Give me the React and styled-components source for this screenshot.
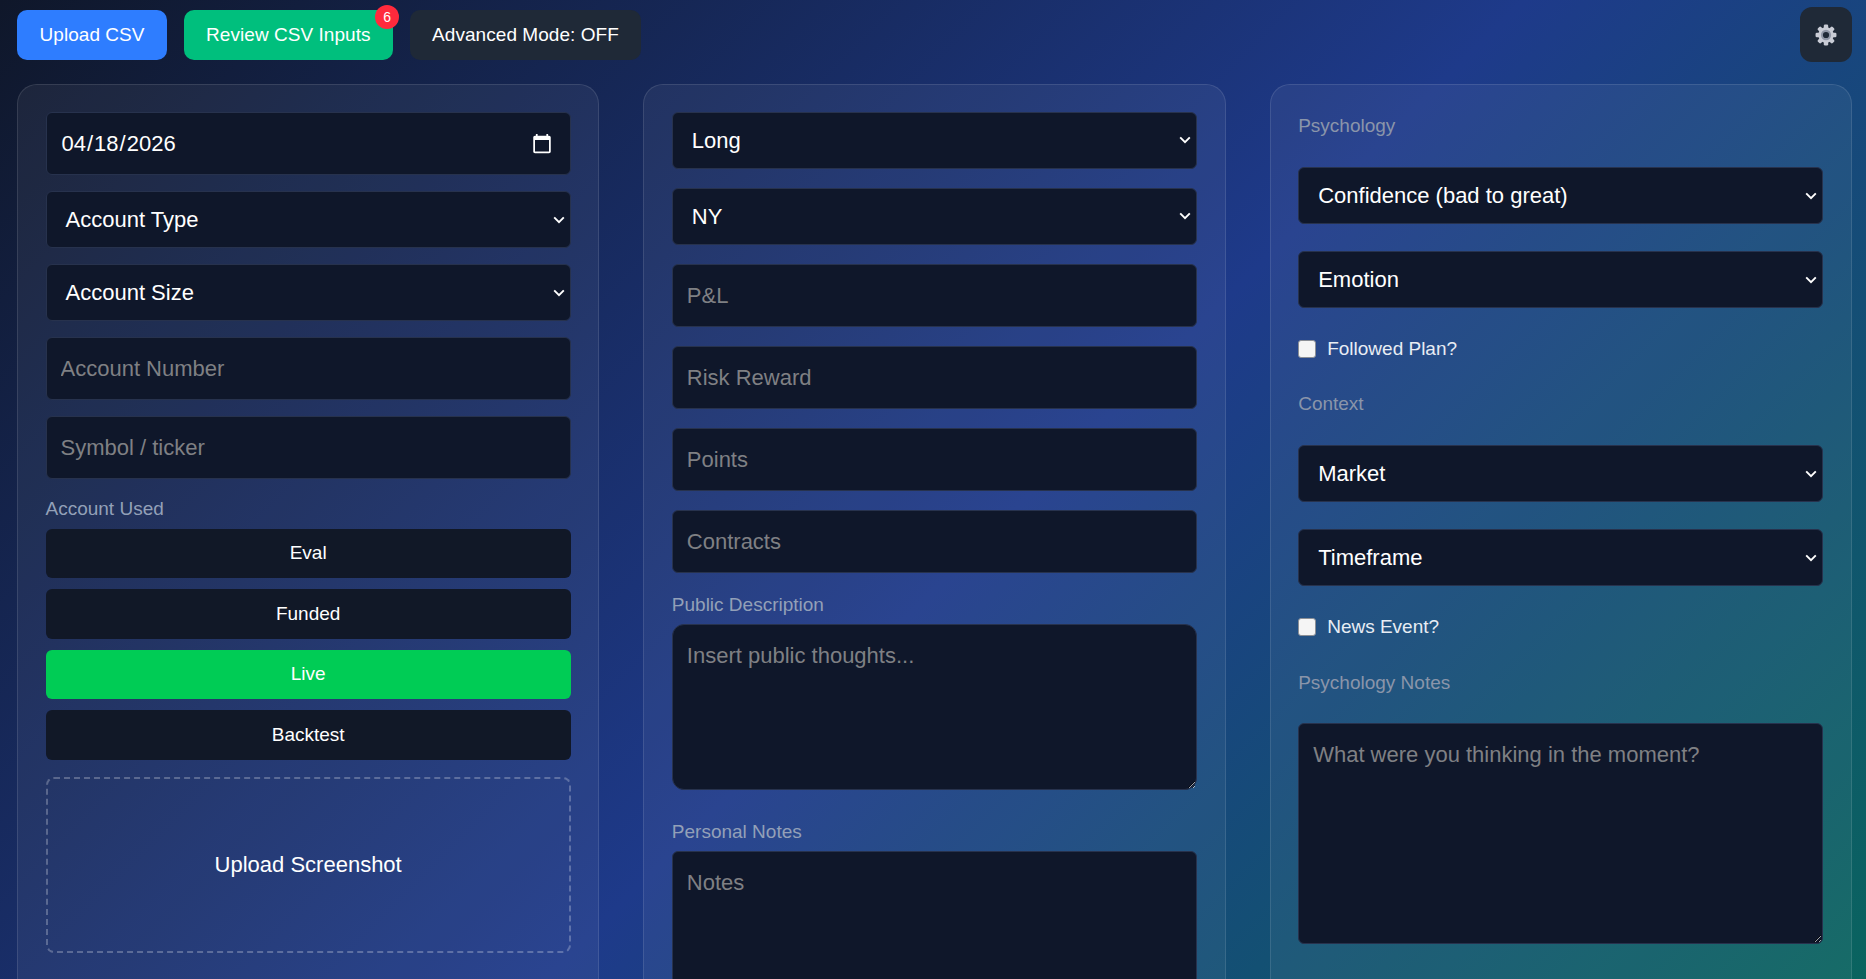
import React from "react";
import styled, { createGlobalStyle } from "styled-components";

const chevron = `url("data:image/svg+xml,%3Csvg xmlns='http://www.w3.org/2000/svg' width='12' height='8' viewBox='0 0 12 8'%3E%3Cpath d='M1.2 1.4 6 6.2l4.8-4.8' fill='none' stroke='%23ffffff' stroke-width='1.9'/%3E%3C/svg%3E")`;

const Global = createGlobalStyle`
  html, body { margin: 0; padding: 0; height: 100%; overflow: hidden; }
  body { font-family: "Liberation Sans", Arial, sans-serif; color: #fff; }
  #root { height: 100%; }
  * { box-sizing: border-box; }
`;

const Page = styled.div`
  padding: 7px 14px 0 17px;
  background: linear-gradient(135deg, #0f172a 0%, #1e3a8a 50%, #066a58 100%);
`;

const TopBar = styled.header`
  display: flex;
  align-items: center;
  justify-content: space-between;
  height: 55px;
  margin-bottom: 22px;
`;

const TopActions = styled.div`
  display: flex;
  gap: 16.5px;
`;

const TopButton = styled.button`
  position: relative;
  height: 50px;
  padding: 0 22.5px;
  border: 0;
  border-radius: 10px;
  background: ${(p) => p.$bg};
  color: #fff;
  font: 19px "Liberation Sans", Arial, sans-serif;
  letter-spacing: 0.05px;
`;

const Badge = styled.span`
  position: absolute;
  top: -5px;
  right: -6px;
  width: 24px;
  height: 24px;
  border-radius: 50%;
  background: #ff2a3c;
  color: #fff;
  font-size: 14px;
  line-height: 24px;
  text-align: center;
`;

const SettingsButton = styled.button`
  display: flex;
  align-items: center;
  justify-content: center;
  width: 52px;
  height: 55px;
  padding: 0;
  border: 0;
  border-radius: 12px;
  background: #1f2937;
`;

const Columns = styled.main`
  display: grid;
  grid-template-columns: repeat(3, 1fr);
  gap: 44px;
`;

const Panel = styled.section`
  display: flex;
  flex-direction: column;
  height: 1100px;
  padding: 27px 27.5px;
  border: 1px solid rgba(255, 255, 255, 0.11);
  border-radius: 20px;
  background: rgba(255, 255, 255, 0.055);
`;

const fieldBase = `
  display: block;
  flex: none;
  width: 100%;
  border: 1px solid #27324d;
  border-radius: 6px;
  background-color: #0f172a;
  color: #fff;
  font: 22px "Liberation Sans", Arial, sans-serif;
  outline: none;
  &::placeholder { color: #7f8084; opacity: 1; }
`;

const TextInput = styled.input`
  ${fieldBase}
  height: ${(p) => p.$h || 63}px;
  margin-top: ${(p) => p.$mt || 0}px;
  padding: 0 14px;
  color-scheme: dark;
  &::-webkit-calendar-picker-indicator { margin-right: 1px; }
`;

const Select = styled.select`
  ${fieldBase}
  height: ${(p) => p.$h || 57}px;
  margin-top: ${(p) => p.$mt || 0}px;
  padding: 0 30px 0 15px;
  appearance: none;
  background-image: ${chevron};
  background-repeat: no-repeat;
  background-position: right 5px center;
  text-indent: 4px;
`;

const TextArea = styled.textarea`
  ${fieldBase}
  height: ${(p) => p.$h}px;
  margin-top: ${(p) => p.$mt || 0}px;
  padding: 18px 14px;
  border-radius: ${(p) => p.$radius || 6}px;
  color-scheme: dark;
`;

const FieldLabel = styled.div`
  flex: none;
  height: 22px;
  margin-top: ${(p) => p.$mt || 0}px;
  color: ${(p) => p.$color || "#93a0b8"};
  font-size: 19px;
  line-height: 22px;
`;

const OptionList = styled.div`
  display: flex;
  flex-direction: column;
  gap: 11px;
  margin-top: 8.5px;
`;

const OptionButton = styled.button`
  height: 49.5px;
  border: 0;
  border-radius: 6px;
  background: ${(p) => (p.$active ? "#00cc55" : "#111827")};
  color: #fff;
  font: 19px "Liberation Sans", Arial, sans-serif;
`;

const UploadZone = styled.div`
  display: flex;
  flex: none;
  align-items: center;
  justify-content: center;
  height: 176px;
  margin-top: 17px;
  border: 2px dashed rgba(255, 255, 255, 0.25);
  border-radius: 8px;
  font-size: 22px;
`;

const CheckRow = styled.label`
  display: flex;
  flex: none;
  align-items: center;
  gap: 11px;
  height: 22px;
  margin-top: ${(p) => p.$mt || 0}px;
  color: #e8edf4;
  font-size: 19px;
`;

const CheckBox = styled.input`
  appearance: none;
  width: 18px;
  height: 18px;
  margin: 0;
  border: 1px solid #8b8f96;
  border-radius: 3px;
  background: #f5f5f5;
`;

const Gear = () => (
  <svg width="22" height="22" viewBox="0 0 24 24" aria-hidden="true">
    <g fill="#c9ccd6">
      {[0, 45, 90, 135, 180, 225, 270, 315].map((a) => (
        <rect key={a} x="9.6" y="0.6" width="4.8" height="6" rx="1.4" transform={`rotate(${a} 12 12)`} />
      ))}
      <circle cx="12" cy="12" r="8.4" />
    </g>
    <circle cx="12" cy="12" r="5.6" fill="#8f96a6" />
    <circle cx="12" cy="12" r="3.4" fill="#1f2937" />
  </svg>
);

const Opt = ({ children }) => <option>{children}</option>;

export default function App() {
  return (
    <Page>
      <Global />
      <TopBar>
        <TopActions>
          <TopButton $bg="#2e7dff">Upload CSV</TopButton>
          <TopButton $bg="#00bf7d">
            Review CSV Inputs
            <Badge>6</Badge>
          </TopButton>
          <TopButton $bg="#1f2937">Advanced Mode: OFF</TopButton>
        </TopActions>
        <SettingsButton aria-label="Settings">
          <Gear />
        </SettingsButton>
      </TopBar>
      <Columns>
        <Panel>
          <TextInput type="date" defaultValue="2026-04-18" />
          <Select $mt={16}><Opt>Account Type</Opt></Select>
          <Select $mt={16}><Opt>Account Size</Opt></Select>
          <TextInput $mt={16} placeholder="Account Number" />
          <TextInput $mt={16} placeholder="Symbol / ticker" />
          <FieldLabel $mt={19}>Account Used</FieldLabel>
          <OptionList>
            <OptionButton>Eval</OptionButton>
            <OptionButton>Funded</OptionButton>
            <OptionButton $active>Live</OptionButton>
            <OptionButton>Backtest</OptionButton>
          </OptionList>
          <UploadZone>Upload Screenshot</UploadZone>
        </Panel>
        <Panel>
          <Select $h={56.5}><Opt>Long</Opt></Select>
          <Select $h={57} $mt={19}><Opt>NY</Opt></Select>
          <TextInput $mt={19.5} placeholder="P&L" />
          <TextInput $mt={19} placeholder="Risk Reward" />
          <TextInput $mt={19} placeholder="Points" />
          <TextInput $mt={19} placeholder="Contracts" />
          <FieldLabel $mt={20.5}>Public Description</FieldLabel>
          <TextArea $h={166} $mt={8} $radius={12} placeholder="Insert public thoughts..." />
          <FieldLabel $mt={31}>Personal Notes</FieldLabel>
          <TextArea $h={220} $mt={8} placeholder="Notes" />
        </Panel>
        <Panel>
          <FieldLabel $mt={3} $color="#8a95aa">Psychology</FieldLabel>
          <Select $mt={30}><Opt>Confidence (bad to great)</Opt></Select>
          <Select $mt={27}><Opt>Emotion</Opt></Select>
          <CheckRow $mt={30}><CheckBox type="checkbox" />Followed Plan?</CheckRow>
          <FieldLabel $mt={33} $color="#8a95aa">Context</FieldLabel>
          <Select $mt={30}><Opt>Market</Opt></Select>
          <Select $mt={27}><Opt>Timeframe</Opt></Select>
          <CheckRow $mt={30}><CheckBox type="checkbox" />News Event?</CheckRow>
          <FieldLabel $mt={34} $color="#8a95aa">Psychology Notes</FieldLabel>
          <TextArea $h={221} $mt={29} placeholder="What were you thinking in the moment?" />
        </Panel>
      </Columns>
    </Page>
  );
}
